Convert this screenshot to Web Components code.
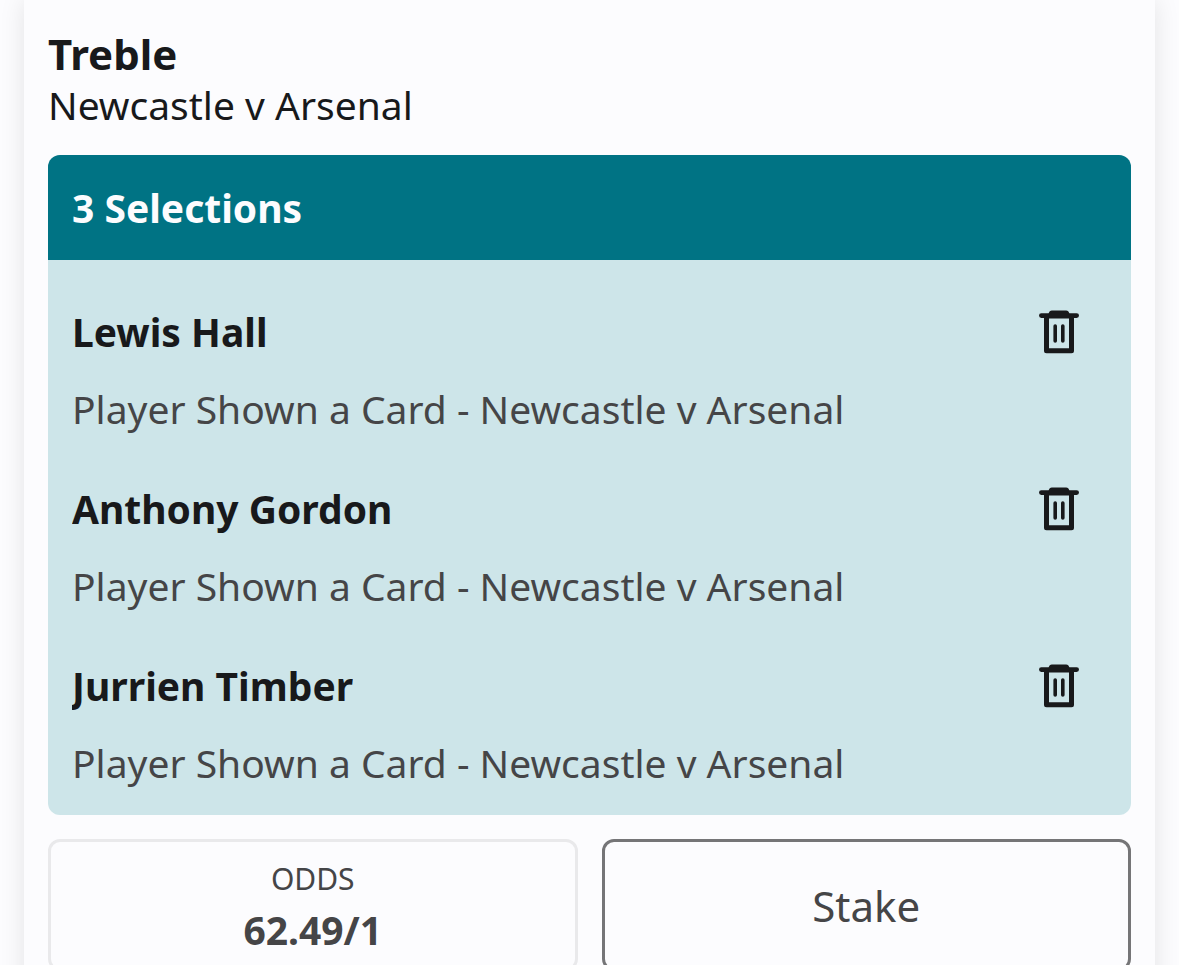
<!DOCTYPE html>
<html lang="en">
<head>
<meta charset="utf-8">
<meta name="viewport" content="width=device-width, initial-scale=1">
<title>Bet slip</title>
<style>
  body {
    margin: 0;
    height: 100vh;
    overflow: hidden;
    background: #fcfcfe;
    color: #18191b;
    font-family: "Noto Sans", sans-serif;
    font-size: 39px;
    --muted: #454547;
    --surface: #fcfcfe;
    --teal: #007384;
    --teal-soft: #cde5e9;
    --radius: 12px;
  }
</style>
</head>
<body>
<bet-card>
  <bet-title>Treble<span slot="event">Newcastle v Arsenal</span></bet-title>
  <selection-list>
    <span slot="heading">3 Selections</span>
    <bet-selection name="Lewis Hall">Player Shown a Card - Newcastle v Arsenal</bet-selection>
    <bet-selection name="Anthony Gordon">Player Shown a Card - Newcastle v Arsenal</bet-selection>
    <bet-selection name="Jurrien Timber">Player Shown a Card - Newcastle v Arsenal</bet-selection>
  </selection-list>
  <bet-odds slot="footer">62.49/1<span slot="label">ODDS</span></bet-odds>
  <stake-field slot="footer"></stake-field>
</bet-card>

<script>
  class BetElement extends HTMLElement {
    constructor() {
      super();
      this.attachShadow({ mode: "open" }).innerHTML = this.constructor.markup;
    }
  }

  customElements.define("bet-card", class extends BetElement {
    static markup = `
      <style>
        :host {
          display: block;
          margin: 0 24px;
          padding: 27px 24px 24px;
          min-height: 100vh;
          background: var(--surface);
          box-shadow: 0 0 24px rgba(0, 0, 0, .1);
        }
        .footer {
          display: grid;
          grid-template-columns: 1fr 1fr;
          gap: 24px;
          margin-top: 24px;
        }
      </style>
      <slot></slot>
      <div class="footer"><slot name="footer"></slot></div>`;
  });

  customElements.define("bet-title", class extends BetElement {
    static markup = `
      <style>
        :host { display: block; margin-bottom: 26px; }
        h1 { margin: 0; font-size: 42px; line-height: 54px; font-weight: 700; }
        p { margin: 0; line-height: 48px; }
      </style>
      <h1><slot></slot></h1>
      <p><slot name="event"></slot></p>`;
  });

  customElements.define("selection-list", class extends BetElement {
    static markup = `
      <style>
        :host {
          display: block;
          border-radius: var(--radius);
          overflow: hidden;
          background: var(--teal-soft);
        }
        h2 {
          margin: 0;
          padding: 24px;
          background: var(--teal);
          color: #fcfcfe;
          font-size: 39px;
          line-height: 57px;
          font-weight: 700;
        }
        .items { padding: 24px 24px 0; }
      </style>
      <h2><slot name="heading"></slot></h2>
      <div class="items"><slot></slot></div>`;
  });

  customElements.define("bet-selection", class extends BetElement {
    static markup = `
      <style>
        :host { display: block; padding-bottom: 24px; }
        .row {
          display: flex;
          align-items: center;
          justify-content: space-between;
          height: 96px;
        }
        h3 {
          margin: 0;
          overflow: hidden;
          font-size: 39px;
          line-height: 56px;
          font-weight: 700;
        }
        p { margin: 0; line-height: 57px; color: var(--muted); }
        button {
          display: flex;
          padding: 24px 28px;
          border: 0;
          background: none;
          color: inherit;
          cursor: pointer;
        }
        svg { display: block; width: 40px; height: 44px; }
      </style>
      <div class="row">
        <h3></h3>
        <button type="button">
          <svg viewBox="0 0 40 44" fill="none" stroke="currentColor" stroke-linecap="round" stroke-linejoin="round" aria-hidden="true">
            <path d="M2.4 5.6H37.6" stroke-width="4.8"/>
            <path d="M12.8 .6H27.2Q29.6 .6 30.4 3.8V8.4H9.6V3.8Q10.4 .6 12.8 .6Z" fill="currentColor" stroke="none"/>
            <path d="M7.5 7V40.7H32.5V7" stroke-width="5"/>
            <path d="M16.2 16V31M23.8 16V31" stroke-width="3.6"/>
          </svg>
        </button>
      </div>
      <p><slot></slot></p>`;
    connectedCallback() {
      const name = this.getAttribute("name");
      this.shadowRoot.querySelector("h3").textContent = name;
      this.shadowRoot.querySelector("button").setAttribute("aria-label", "Remove " + name);
    }
  });

  customElements.define("bet-odds", class extends BetElement {
    static markup = `
      <style>
        :host {
          display: block;
          box-sizing: border-box;
          height: 132px;
          padding-top: 16px;
          border: 3px solid #e9e9eb;
          border-radius: var(--radius);
          color: var(--muted);
          text-align: center;
        }
        .label { font-size: 30px; line-height: 42px; }
        .value { line-height: 60px; font-weight: 700; }
      </style>
      <div class="label"><slot name="label"></slot></div>
      <div class="value"><slot></slot></div>`;
  });

  customElements.define("stake-field", class extends BetElement {
    static markup = `
      <style>
        :host { display: block; }
        input {
          display: block;
          box-sizing: border-box;
          width: 100%;
          height: 132px;
          padding: 0 24px;
          border: 3px solid #757577;
          border-radius: var(--radius);
          background: var(--surface);
          color: var(--muted);
          font: 42px "Noto Sans", sans-serif;
          text-align: center;
        }
        input::placeholder { color: var(--muted); opacity: 1; }
      </style>
      <input type="text" inputmode="decimal" placeholder="Stake" aria-label="Stake">`;
  });
</script>
</body>
</html>
